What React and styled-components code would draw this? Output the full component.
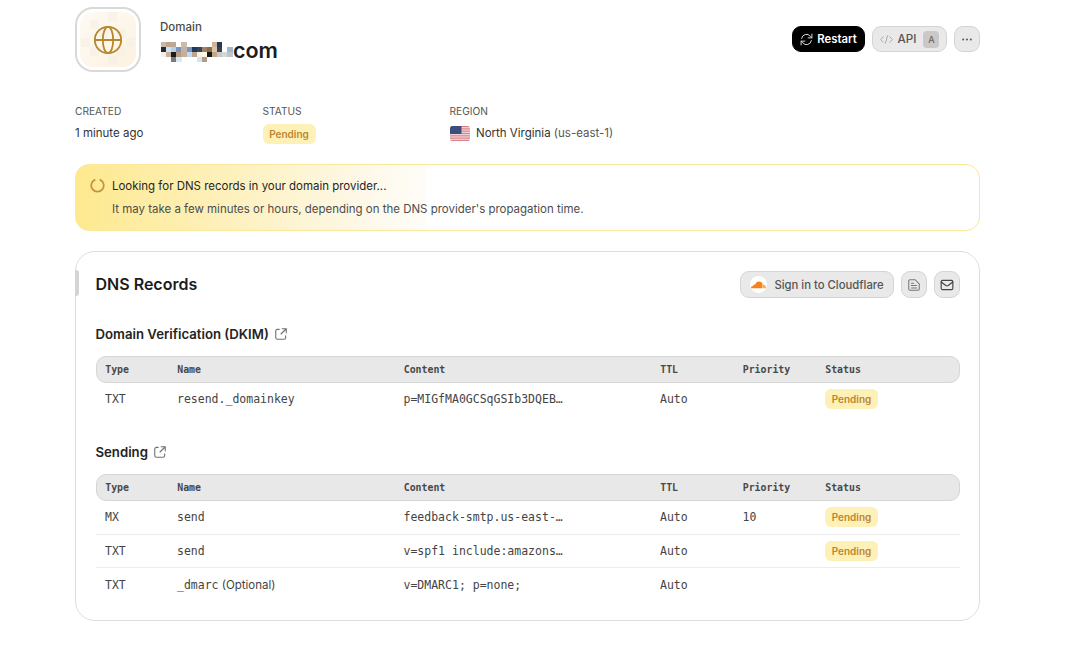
import React from 'react';
import styled, { createGlobalStyle, css } from 'styled-components';

const Global = createGlobalStyle`
  * { box-sizing: border-box; }
  body { margin: 0; background: #fff; font-family: Inter, sans-serif; color: #1c1c1c; }
  h1, h2, h3, p { margin: 0; }
  svg { display: block; flex: none; }
`;

const Page = styled.main`
  width: 1080px; height: 653px; padding: 7px 100px 0 75px; overflow: hidden;
`;
const Header = styled.header`
  display: flex; align-items: flex-start; height: 97px;
`;
const Logo = styled.div`
  width: 66px; height: 65px; border: 2px solid #d9d9d9; border-radius: 18px;
  padding: 3px; background: #fff; flex: none;
`;
const LogoInner = styled.div`
  position: relative; width: 100%; height: 100%; border-radius: 13px; overflow: hidden;
  background: linear-gradient(135deg, #fdfaf4, #fdf2e0);
  display: flex; align-items: center; justify-content: center;
`;
const Tiles = styled.svg`
  position: absolute; inset: 0;
`;
const GlobeIcon = styled.svg`
  position: relative;
`;
const Title = styled.div`
  margin-left: 19px; padding-top: 12px; flex: 1;
`;
const Kicker = styled.div`
  font-size: 11.5px; line-height: 16px; font-weight: 500; color: #4a4a4a;
`;
const DomainName = styled.h1`
  display: flex; align-items: center; margin-top: 2px; padding-left: 1px;
  font-size: 21.5px; line-height: 26px; font-weight: 600;
  svg { margin-top: 3px; }
`;
const Actions = styled.div`
  display: flex; gap: 7px; padding-top: 19px;
`;
const Button = styled.button`
  display: flex; align-items: center; justify-content: center; height: ${p => p.$h || 27}px;
  width: ${p => p.$w}px; padding: 0; gap: ${p => p.$gap || 4}px;
  border: 1px solid #d4d4d4; border-radius: 9px; background: #e9e9e9; color: #555;
  font: 500 ${p => p.$size || 11.5}px Inter, sans-serif;
  ${p => p.$dark && css`background: #000; border-color: #000; color: #fff; font-weight: 600;`}
`;
const KeyHint = styled.span`
  width: 16px; height: 17px; margin-left: 2px; border-radius: 4px; background: #cbc9c7; color: #666;
  font-size: 9px; line-height: 17px; text-align: center;
`;
const Facts = styled.section`
  display: grid; grid-template-columns: 187.5px 187px 1fr; height: 60px;
`;
const FactLabel = styled.div`
  font-size: 10.2px; line-height: 14px; color: #555;
`;
const FactValue = styled.div`
  display: flex; align-items: center; height: 20px; margin-top: ${p => p.$top || 5}px;
  font-size: 11.5px; color: #333; gap: 6.5px; white-space: pre;
`;
const Muted = styled.span`
  color: #555;
`;
const Badge = styled.span`
  display: flex; align-items: center; justify-content: center;
  width: 53px; height: 20px; border-radius: 6px; background: #fdf1b8; color: #bd852f;
  font: 600 10px Inter, sans-serif;
`;
const Notice = styled.section`
  display: flex; height: 67px; padding: 13px 14px; gap: 7px;
  border: 1px solid #fae99b; border-radius: 14px;
  background: linear-gradient(90deg, #fee98f 0, #fdf0b9 140px, #fdf9ec 300px, #fffdf8 350px, #fff 352px);
`;
const NoticeText = styled.div`
  font-size: 11.48px; line-height: 16px; color: #252525;
  p + p { margin-top: 7px; color: #4d4d4d; }
`;
const Card = styled.section`
  position: relative; margin-top: 20px; height: 370px; padding: 19px 19px 0 19.5px;
  border: 1px solid #dedede; border-radius: 20px;
`;
const Marker = styled.span`
  position: absolute; left: -1px; top: 18px; width: 4px; height: 26px;
  background: #d4d4d4; border-radius: 0 3px 3px 0;
`;
const CardHeader = styled.div`
  display: flex; align-items: center; gap: 7px; height: 27px;
  h2 { flex: 1; font-size: 16px; line-height: 20px; font-weight: 600; padding-bottom: 2px; }
`;
const CloudBadge = styled.span`
  display: flex; width: 17px; height: 17px; border-radius: 50%; background: #fff;
  align-items: center; justify-content: center;
`;
const SectionTitle = styled.h3`
  display: flex; align-items: center; gap: 5px; height: 20px; margin-top: ${p => p.$top}px;
  font-size: 13.2px; font-weight: 600; color: #242424;
`;
const Row = styled.div`
  display: grid; grid-template-columns: 72px 226.5px 256.5px 82.5px 82.5px 1fr;
  align-items: center; height: ${p => p.$h || 33.6}px; padding-left: 9.5px;
  border-bottom: ${p => p.$last ? 0 : '1px solid #ececec'};
  font: 11.5px "DejaVu Sans Mono", monospace; color: #444;
`;
const HeadRow = styled(Row)`
  height: 27px; margin-top: 12px; padding-left: 8.7px; border: 1px solid #d6d6d6; border-radius: 10px;
  background: #e8e8e8; font-size: 9.9px; font-weight: 700; color: #484848;
`;
const Optional = styled.span`
  font: 11.5px Inter, sans-serif;
`;

const MASK = [
  ['#cbb9a8', '#bda591', '#bca899', '', '#cdbcaa', '', '', '', '', '', '#cbb39c', '#24394e', '', ''],
  ['#2a2a2a', '#cde5fa', '#b9cfe6', '#7894bb', '#c3b3a6', '#7d95b2', '#1e3a5c', '#364457', '#a08165', '#8b6c4f', '#d9c4ae', '#38414a', '', '#9db6d2'],
  ['#f0f0f0', '#cbb09a', '#1c1c1c', '#b59c86', '#c7ad98', '#badcf6', '#bca58e', '#faf0dc', '#fcf5e8', '#16181a', '#c2a68c', '#c9c9cb', '#d6d6d8', '#c0c5cc'],
  ['', '', '#77797c', '#d5e9fa', '', '', '', '#d3e4f2', '#b39b84', '', '', '', '', ''],
];

const Mask = () => (
  <svg width="72" height="20" viewBox="0 0 72 20" shapeRendering="crispEdges">
    {MASK.map((r, y) => r.map((c, x) => c && <rect key={`${x}-${y}`} x={x * 5.1} y={y * 5} width="5.2" height="5" fill={c} />))}
  </svg>
);

const Stroke = ({ size, children, w = 1.5, color = 'currentColor' }) => (
  <svg width={size} height={size} viewBox="0 0 24 24" fill="none" stroke={color} strokeWidth={w} strokeLinecap="round" strokeLinejoin="round">{children}</svg>
);
const External = () => (
  <Stroke size={14} w={1.9} color="#707070"><path d="M9 4H6a3 3 0 0 0-3 3v11a3 3 0 0 0 3 3h11a3 3 0 0 0 3-3v-3M14 3h7v7M21 3l-9 9" /></Stroke>
);
const Flag = () => (
  <svg width="20" height="15" viewBox="0 0 20 15">
    <defs><clipPath id="flag"><rect width="20" height="15" rx="2.5" /></clipPath></defs>
    <g clipPath="url(#flag)">
      <rect width="20" height="15" fill="#f3dcdd" />
      {[0, 2, 4, 6, 8, 10, 12].map(i => <rect key={i} y={i * 15 / 13} width="20" height="1.16" fill="#dc8088" />)}
      <rect width="11.5" height="8" fill="#3c4f7c" />
    </g>
  </svg>
);

const HeadCells = () => (
  <HeadRow><span>Type</span><span>Name</span><span>Content</span><span>TTL</span><span>Priority</span><span>Status</span></HeadRow>
);
const Record = ({ type, name, note, content, priority, pending, last, h }) => (
  <Row $last={last} $h={h}>
    <span>{type}</span><span>{name}{note && <Optional> {note}</Optional>}</span><span>{content}</span>
    <span>Auto</span><span>{priority}</span><span>{pending && <Badge>Pending</Badge>}</span>
  </Row>
);

export default function App() {
  return (
    <Page>
      <Global />
      <Header>
        <Logo>
          <LogoInner>
            <Tiles width="56" height="56">
              {[[10, 8], [28, 0], [19, 17], [1, 26], [37, 17], [10, 35], [28, 44], [46, 26], [37, 35]].map(([x, y]) => (
                <rect key={`${x}-${y}`} x={x} y={y} width="9" height="9" fill="#f5eee6" opacity=".6" />
              ))}
            </Tiles>
            <GlobeIcon width="30" height="30" viewBox="0 0 30 30" fill="none" stroke="#b5882f" strokeWidth="1.8">
              <circle cx="15" cy="15" r="13.2" /><path d="M2 15h26" /><ellipse cx="15" cy="15" rx="5.2" ry="13.2" />
            </GlobeIcon>
          </LogoInner>
        </Logo>
        <Title>
          <Kicker>Domain</Kicker>
          <DomainName><Mask /><span>com</span></DomainName>
        </Title>
        <Actions>
          <Button $dark $w={73} $h={26} $size={11.3}>
            <Stroke size={13} w={1.8} color="#ddd"><path d="M3 10A9 9 0 0 1 19 6l3 3M22 2v7h-7M21 14a9 9 0 0 1-16 4l-3-3M2 22v-7h7" /></Stroke>
            Restart
          </Button>
          <Button $w={75} $h={26} $size={11.6} $gap={5}>
            <Stroke size={13} w={1.8} color="#aaa"><path d="M6 7l-5 5 5 5M18 7l5 5-5 5M14 5l-4 14" /></Stroke>
            API<KeyHint>A</KeyHint>
          </Button>
          <Button $w={26} $h={26}>
            <svg width="10" height="3" viewBox="0 0 10 3" fill="#555"><circle cx="1.2" cy="1.5" r="1" /><circle cx="5" cy="1.5" r="1" /><circle cx="8.8" cy="1.5" r="1" /></svg>
          </Button>
        </Actions>
      </Header>
      <Facts>
        <div><FactLabel>CREATED</FactLabel><FactValue>1 minute ago</FactValue></div>
        <div><FactLabel>STATUS</FactLabel><FactValue $top={6}><Badge>Pending</Badge></FactValue></div>
        <div><FactLabel>REGION</FactLabel><FactValue><Flag /><span>North Virginia <Muted>(us-east-1)</Muted></span></FactValue></div>
      </Facts>
      <Notice>
        <Stroke size={15} w={2.8} color="#c8923c"><path d="M16.500 3a10 10 0 1 1-9 0" /></Stroke>
        <NoticeText>
          <p>Looking for DNS records in your domain provider...</p>
          <p>It may take a few minutes or hours, depending on the DNS provider's propagation time.</p>
        </NoticeText>
      </Notice>
      <Card>
        <Marker />
        <CardHeader>
          <h2>DNS Records</h2>
          <Button $w={154} $gap={7} $size={11.3}>
            <CloudBadge>
              <svg width="15" height="8" viewBox="0 0 15 8">
                <path d="M0 7.2C0 5.7 1 5 2.2 5 2.2 3.8 3.3 3.2 4.2 3.7 4.8 1.5 6.2.5 8 .5c2 0 3.3 1.3 3.6 3L11 7.2z" fill="#f6821f" />
                <path d="M11.2 7.2l.8-3.7c1.8 0 3 1.500 3 3.700z" fill="#fbad41" />
              </svg>
            </CloudBadge>
            Sign in to Cloudflare
          </Button>
          <Button $w={26}>
            <Stroke size={14} w={1.8} color="#777"><path d="M14 3H5a2 2 0 0 0-2 2v14a2 2 0 0 0 2 2h14a2 2 0 0 0 2-2V10zM7.500 9h4M7.500 13h9M7.500 17h9" /></Stroke>
          </Button>
          <Button $w={26}>
            <Stroke size={14} w={2} color="#444"><rect x="2" y="4" width="20" height="16" rx="2.500" /><path d="M2 7l8 6q2 1.300 4 0l8-6" /></Stroke>
          </Button>
        </CardHeader>
        <SectionTitle $top={26}>Domain Verification (DKIM) <External /></SectionTitle>
        <HeadCells />
        <Record type="TXT" name="resend._domainkey" content="p=MIGfMA0GCSqGSIb3DQEB…" pending last h={32} />
        <SectionTitle $top={27}>Sending <External /></SectionTitle>
        <HeadCells />
        <Record type="MX" name="send" content="feedback-smtp.us-east-…" priority="10" pending />
        <Record type="TXT" name="send" content="v=spf1 include:amazons…" pending />
        <Record type="TXT" name="_dmarc" note="(Optional)" content="v=DMARC1; p=none;" last h={33} />
      </Card>
    </Page>
  );
}
